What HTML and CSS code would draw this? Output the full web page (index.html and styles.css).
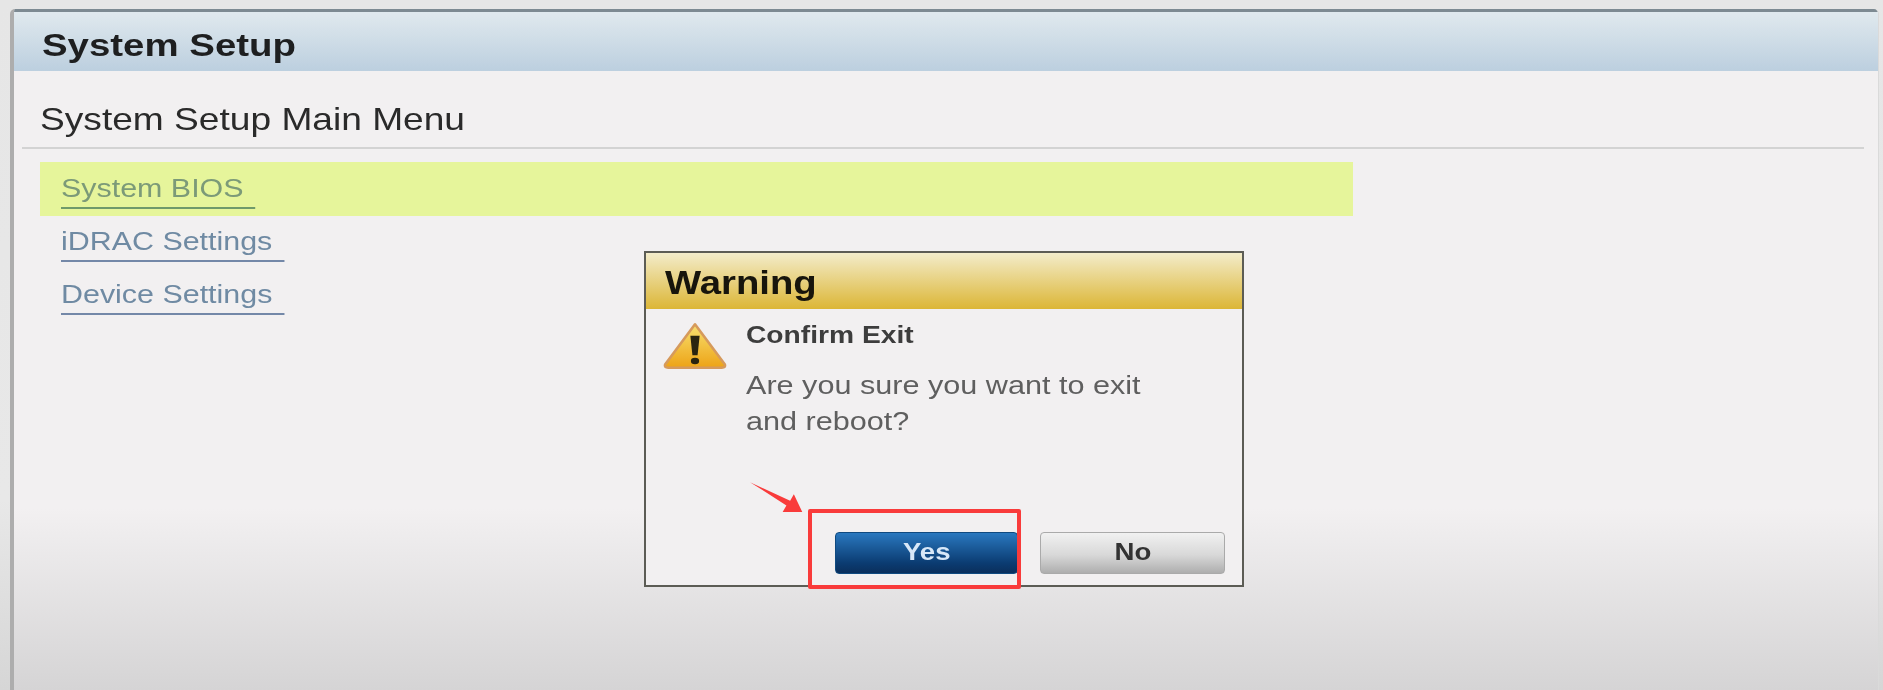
FILE: index.html
```html
<!DOCTYPE html>
<html lang="en">
<head>
    <meta charset="UTF-8">
    <meta name="viewport" content="width=device-width, initial-scale=1.0">
    <title>System Setup</title>
    <link rel="stylesheet" href="styles.css">
</head>
<body>
    <div class="window">
        <header class="window-header">
            <h1 class="wide">System Setup</h1>
        </header>
        <h2 class="menu-title"><span class="wide">System Setup Main Menu</span></h2>
        <ul class="menu">
            <li class="menu-item active"><a class="wide">System BIOS</a></li>
            <li class="menu-item"><a class="wide">iDRAC Settings</a></li>
            <li class="menu-item"><a class="wide">Device Settings</a></li>
        </ul>
    </div>

    <section class="dialog">
        <div class="dialog-header"><span class="wide">Warning</span></div>
        <div class="dialog-body">
            <svg class="warn-icon" viewBox="0 0 62 46" aria-hidden="true">
                <defs>
                    <linearGradient id="warn-fill" x1="0" y1="0" x2="0" y2="1">
                        <stop offset="0" stop-color="#f8e070"/>
                        <stop offset="1" stop-color="#eda316"/>
                    </linearGradient>
                </defs>
                <path d="M31 2 L60 41 Q61 44 57 44 L5 44 Q1 44 2 41 Z" fill="url(#warn-fill)" stroke="#d69a5c" stroke-width="2.5" stroke-linejoin="round"/>
                <path d="M26.5 13 L35.5 13 L33.5 32 L28.5 32 Z" fill="#2a2410"/>
                <ellipse cx="31" cy="37.5" rx="4" ry="3.2" fill="#2a2410"/>
            </svg>
            <div class="dialog-text">
                <h3>Confirm Exit</h3>
                <p>Are you sure you want to exit<br>and reboot?</p>
            </div>
        </div>
        <div class="dialog-buttons">
            <button class="btn btn-yes"><span class="wide-center">Yes</span></button>
            <button class="btn btn-no"><span class="wide-center">No</span></button>
        </div>
    </section>

    <!-- red annotation drawn on top of the screenshot -->
    <div class="callout-box"></div>
    <svg class="callout-arrow" viewBox="0 0 60 34" aria-hidden="true">
        <path d="M0 0 L43 20 L47 13 L56 32 L35 32 L39 25 Z" fill="#f93b3b"/>
    </svg>
</body>
</html>
```

FILE: styles.css
```css
html, body {
    height: 100%;
}
body {
    margin: 0;
    height: 690px;
    overflow: hidden;
    position: relative;
    font-family: "Liberation Sans", Arial, sans-serif;
    background: linear-gradient(#e6e6e6 0, #e8e8e8 500px, #d6d6d6 690px);
}
.wide {
    display: inline-block;
    transform: scaleX(1.2);
    transform-origin: left center;
    white-space: nowrap;
}
.wide-center {
    display: inline-block;
    transform: scaleX(1.15);
}

/* main window */
.window {
    margin: 9px 4px 0 10px;
    height: 681px;
    box-sizing: border-box;
    border-left: 4px solid #adadad;
    border-right: 1px solid #dadada;
    border-radius: 5px 5px 0 0;
    background: linear-gradient(#f2f0f1 0, #f2f0f1 500px, #d5d4d5 681px);
    overflow: hidden;
    filter: blur(0.5px);
}
.window-header {
    height: 62px;
    box-sizing: border-box;
    border-top: 3px solid #7d8a92;
    padding: 15px 0 0 28px;
    background: linear-gradient(#e0e9ee, #bccfdf);
}
.window-header h1 {
    margin: 0;
    font-size: 32px;
    line-height: 36px;
    color: #1e1f20;
}
.menu-title {
    margin: 0 14px 0 8px;
    height: 78px;
    box-sizing: border-box;
    padding: 33px 0 0 18px;
    border-bottom: 2px solid #d3d3d3;
    font-size: 32px;
    line-height: 30px;
    font-weight: normal;
    color: #2a2a2a;
}
.menu-title .wide {
    transform: scaleX(1.16);
}
.menu {
    list-style: none;
    margin: 13px 0 0 26px;
    padding: 0;
    width: 1313px;
}
.menu-item {
    height: 53px;
    box-sizing: border-box;
    padding: 11px 0 0 21px;
}
.menu-item.active {
    height: 54px;
    margin-bottom: -1px;
    background: #e6f59b;
}
.menu-item a {
    padding: 0 10px 4px 0;
    border-bottom: 2px solid #7488a8;
    font-size: 26px;
    line-height: 30px;
    color: #6f8aa3;
    transform: scaleX(1.17);
}
.menu-item.active a {
    color: #7c9a78;
    border-bottom-color: #6f9a6a;
}

/* warning dialog, sits over the main window */
.dialog {
    position: absolute;
    left: 644px;
    top: 251px;
    width: 600px;
    height: 336px;
    box-sizing: border-box;
    border: 2px solid #5c5c55;
    background: #f2f0f1;
    display: flex;
    flex-direction: column;
    filter: blur(0.5px);
}
.dialog-header {
    height: 56px;
    box-sizing: border-box;
    padding: 11px 0 0 19px;
    background: linear-gradient(#f3ecca, #dcb636);
    font-size: 33px;
    line-height: 38px;
    font-weight: bold;
    color: #17150c;
}
.dialog-header .wide {
    transform: scaleX(1.16);
}
.dialog-body {
    display: flex;
    gap: 19px;
    padding: 13px 0 0 17px;
    flex: 1;
}
.warn-icon {
    width: 64px;
    height: 48px;
    flex: none;
}
.dialog-text h3, .dialog-text p {
    transform: scaleX(1.2);
    transform-origin: left center;
    white-space: nowrap;
}
.dialog-text h3 {
    margin: 0;
    font-size: 23.5px;
    line-height: 26px;
    font-weight: bold;
    color: #3d3d3d;
}
.dialog-text p {
    margin: 19px 0 0;
    font-size: 25.5px;
    line-height: 36px;
    color: #5f5f5f;
}
.dialog-buttons {
    display: flex;
    justify-content: flex-end;
    gap: 22px;
    padding: 0 17px 11px 0;
}
.btn {
    width: 185px;
    height: 42px;
    padding: 0 0 3px;
    border: 1px solid #aaa;
    border-radius: 4px;
    font-family: inherit;
    font-size: 24px;
    font-weight: bold;
}
.btn-yes {
    width: 183px;
    border-color: #104a80;
    background: linear-gradient(#2a78bf, #0b3c72 75%, #0a2f5c);
    color: #d8e8f8;
}
.btn-no {
    background: linear-gradient(#f1f1f1, #d8d8d8 55%, #aeaeae);
    color: #333;
}

/* annotation */
.callout-box {
    position: absolute;
    left: 808px;
    top: 509px;
    width: 213px;
    height: 80px;
    box-sizing: border-box;
    border: 4px solid #f93b3b;
    border-radius: 2px;
}
.callout-arrow {
    position: absolute;
    left: 750px;
    top: 482px;
    width: 56px;
    height: 32px;
}
```
